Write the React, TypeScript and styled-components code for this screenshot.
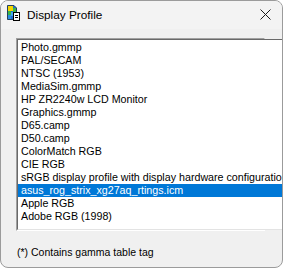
import React from 'react';
import styled, { createGlobalStyle } from 'styled-components';

const GlobalStyle = createGlobalStyle`
  html, body {
    margin: 0;
    padding: 0;
    background: #ffffff;
  }
`;

const Window = styled.div`
  box-sizing: border-box;
  width: 283px;
  height: 268px;
  background: #f0f0f0;
  border: 1px solid #9b9b9b;
  border-radius: 8px;
  display: flex;
  flex-direction: column;
  overflow: hidden;
  font-family: 'Liberation Sans', Arial, sans-serif;
`;

const TitleBar = styled.div`
  height: 28px;
  display: flex;
  align-items: center;
  padding: 0 11px 0 5px;
  background: #f3f3f3;
`;

const IconSlot = styled.div`
  display: flex;
  margin-bottom: 5px;
`;

const TitleText = styled.span`
  flex: 1;
  margin-left: 7px;
  font-family: 'Liberation Sans', Arial, sans-serif;
  font-size: 11.8px;
  color: #000;
`;

const CloseSlot = styled.div`
  display: flex;
  margin-bottom: 2px;
`;

const Body = styled.div`
  flex: 1;
  display: flex;
  flex-direction: column;
  padding: 9px 17px 0 15px;
`;

const ListBox = styled.div`
  box-sizing: border-box;
  height: 193px;
  display: flex;
  border-top: 1px solid #a0a0a0;
  border-left: 1px solid #a0a0a0;
  border-right: 1px solid #ffffff;
  border-bottom: 1px solid #ffffff;
`;

const ListInner = styled.div`
  flex: 1;
  display: flex;
  background: #ffffff;
  border-top: 1px solid #696969;
  border-left: 1px solid #696969;
  border-right: 1px solid #e3e3e3;
  border-bottom: 1px solid #e3e3e3;
`;

const Items = styled.div`
  flex: 1;
  min-width: 0;
  padding-top: 1px;
`;

const Item = styled.div<{ $selected?: boolean }>`
  height: 13px;
  line-height: 13px;
  padding-left: 3px;
  font-size: 10.7px;
  white-space: nowrap;
  overflow: hidden;
  color: ${({ $selected }) => ($selected ? '#ffffff' : '#000000')};
  background: ${({ $selected }) => ($selected ? '#0078d7' : 'transparent')};
`;

const Track = styled.div`
  width: 15px;
  background: #f9f9f9;
  border-left: 1px solid #f0f0f0;
  display: flex;
  justify-content: center;
`;

const Thumb = styled.div<{ $top: number; $height: number }>`
  width: 2px;
  margin-top: ${({ $top }) => $top}px;
  height: ${({ $height }) => $height}px;
  background: #858585;
  border-radius: 1px;
`;

const Footer = styled.div`
  margin-top: 15px;
  padding-left: 1px;
  font-size: 10.5px;
  color: #000;
`;

const AppIcon = () => (
  <svg width="14" height="16" viewBox="0 0 14 16">
    <path d="M1.5 0.5 H8 L10.5 3 V14.5 H1.5 Z" fill="#1f6fd0" stroke="#24405f" />
    <rect x="2" y="1" width="5" height="5" fill="#f4d400" />
    <rect x="7" y="3" width="3" height="4" fill="#3cb44a" />
    <rect x="2" y="6" width="3" height="4" fill="#39b54a" />
    <rect x="5" y="7" width="3" height="4" fill="#45a8ee" />
    <rect x="2" y="10" width="3" height="4" fill="#2a8fe0" />
    <rect x="7.5" y="7.5" width="6" height="8" fill="#ffffff" stroke="#000000" />
    <line x1="9" y1="10.5" x2="12" y2="10.5" stroke="#000" />
    <line x1="9" y1="12.5" x2="12" y2="12.5" stroke="#000" />
  </svg>
);

const CloseIcon = () => (
  <svg width="11" height="11" viewBox="0 0 11 11">
    <path d="M0.5 0.5 L10.5 10.5 M10.5 0.5 L0.5 10.5" stroke="#1a1a1a" strokeWidth="1" />
  </svg>
);

const profiles = [
  'Photo.gmmp',
  'PAL/SECAM',
  'NTSC (1953)',
  'MediaSim.gmmp',
  'HP ZR2240w LCD Monitor',
  'Graphics.gmmp',
  'D65.camp',
  'D50.camp',
  'ColorMatch RGB',
  'CIE RGB',
  'sRGB display profile with display hardware configuration',
  'asus_rog_strix_xg27aq_rtings.icm',
  'Apple RGB',
  'Adobe RGB (1998)',
];

const selected = 11;

export default function App() {
  return (
    <>
      <GlobalStyle />
      <Window>
        <TitleBar>
          <IconSlot>
            <AppIcon />
          </IconSlot>
          <TitleText>Display Profile</TitleText>
          <CloseSlot>
            <CloseIcon />
          </CloseSlot>
        </TitleBar>
        <Body>
          <ListBox>
            <ListInner>
              <Items>
                {profiles.map((p, i) => (
                  <Item key={p} $selected={i === selected}>
                    {p}
                  </Item>
                ))}
              </Items>
              <Track>
                <Thumb $top={68} $height={105} />
              </Track>
            </ListInner>
          </ListBox>
          <Footer>(*) Contains gamma table tag</Footer>
        </Body>
      </Window>
    </>
  );
}
